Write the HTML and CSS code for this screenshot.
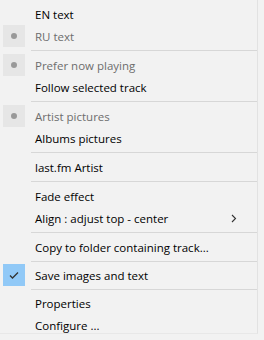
FILE: index.html
```html
<!DOCTYPE html>
<html lang="en">
<head>
    <meta charset="UTF-8">
    <title>Context menu</title>
    <link rel="stylesheet" href="styles.css">
</head>
<body>
    <div class="menu">
        <div class="item"><span class="mark"></span><span class="label">EN text</span></div>
        <div class="item disabled"><span class="mark radio"><span class="dot"></span></span><span class="label">RU text</span></div>
        <div class="sep"></div>
        <div class="item disabled"><span class="mark radio"><span class="dot"></span></span><span class="label">Prefer now playing</span></div>
        <div class="item"><span class="mark"></span><span class="label">Follow selected track</span></div>
        <div class="sep"></div>
        <div class="item disabled"><span class="mark radio"><span class="dot"></span></span><span class="label">Artist pictures</span></div>
        <div class="item"><span class="mark"></span><span class="label">Albums pictures</span></div>
        <div class="sep"></div>
        <div class="item"><span class="mark"></span><span class="label">last.fm Artist</span></div>
        <div class="sep"></div>
        <div class="item"><span class="mark"></span><span class="label">Fade effect</span></div>
        <div class="item">
            <span class="mark"></span><span class="label">Align : adjust top - center</span>
            <svg class="arrow" width="6" height="9" viewBox="0 0 6 9"><path d="M1 1 L4.5 4.5 L1 8" fill="none" stroke="#333" stroke-width="1.1"/></svg>
        </div>
        <div class="sep"></div>
        <div class="item"><span class="mark"></span><span class="label">Copy to folder containing track...</span></div>
        <div class="sep thin"></div>
        <div class="item">
            <span class="mark checked">
                <svg width="22" height="22" viewBox="0 0 22 22"><path d="M7 11.5 L9.5 14 L15 8.5" fill="none" stroke="#333" stroke-width="1.3"/></svg>
            </span>
            <span class="label">Save images and text</span>
        </div>
        <div class="sep thin"></div>
        <div class="item"><span class="mark"></span><span class="label">Properties</span></div>
        <div class="item"><span class="mark"></span><span class="label">Configure ...</span></div>
    </div>
</body>
</html>
```

FILE: styles.css
```css
html, body {
    margin: 0;
    height: 100%;
    background-color: #f2f2f2;
}

.menu {
    width: 258px;
    height: 334px;
    box-sizing: border-box;
    padding-top: 3px;
    border-right: 1px solid #e2e2e2;
    border-bottom: 1px solid #e8e8e8;
    font-family: "Open Sans", "Noto Sans", sans-serif;
    font-size: 11.5px;
    color: #000;
}

.item {
    height: 22px;
    display: flex;
    align-items: center;
}

.mark {
    width: 22px;
    height: 22px;
    margin-left: 3px;
    flex: none;
    display: flex;
    align-items: center;
    justify-content: center;
}

.radio {
    background-color: #e6e6e6;
}

.dot {
    width: 6px;
    height: 6px;
    border-radius: 50%;
    background-color: #999;
}

.checked {
    background-color: #91c9f7;
}

.label {
    margin-left: 10px;
    white-space: nowrap;
}

.disabled .label {
    color: #6d6d6d;
}

.arrow {
    margin-left: auto;
    margin-right: 20px;
}

.sep {
    height: 1px;
    margin: 3px 0 3px 31px;
    background-color: #d7d7d7;
}

.sep.thin {
    margin-bottom: 2px;
}
```
